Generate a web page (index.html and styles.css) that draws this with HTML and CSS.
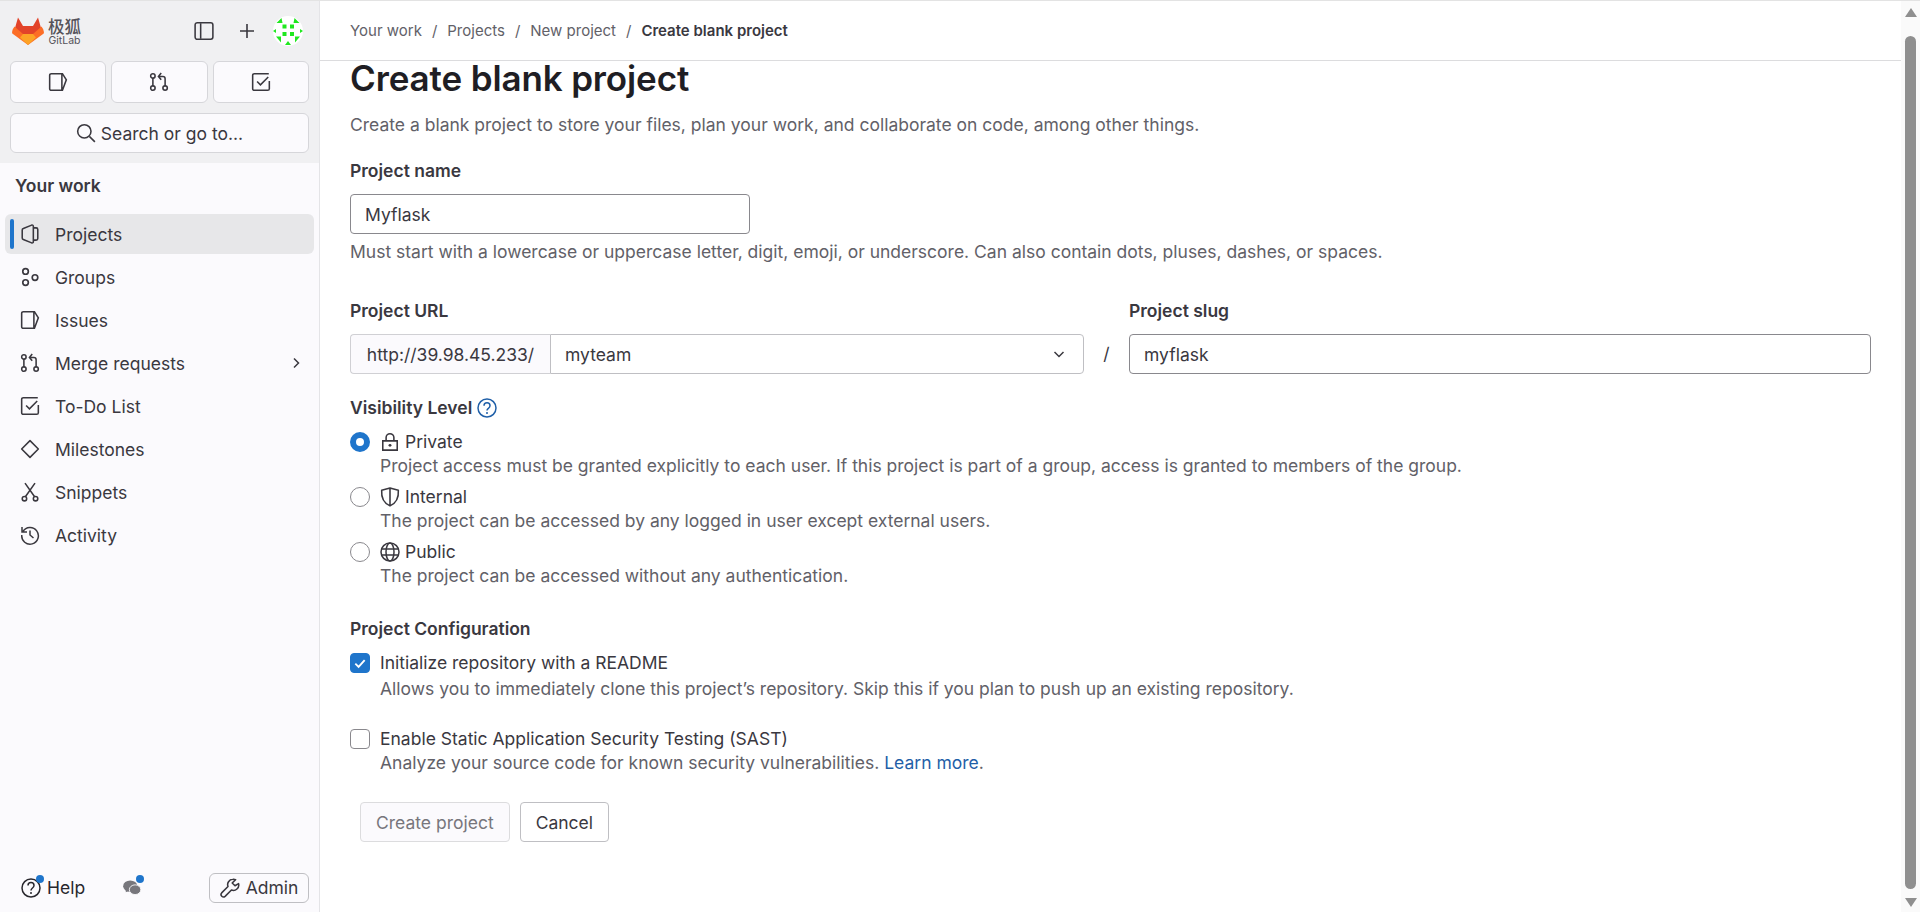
FILE: index.html
```html
<!DOCTYPE html>
<html lang="en">
<head>
<meta charset="UTF-8">
<meta name="viewport" content="width=device-width, initial-scale=1.0">
<title>Create blank project</title>
<link rel="stylesheet" href="styles.css">
</head>
<body>
    <!-- Left sidebar -->
    <div class="sidebar">
        <div class="panel">
            <div class="brand">
                <svg class="logo" viewBox="0 0 32 30" width="32" height="30">
                    <path fill="#e24329" d="M16 29 3 12 6 1.500 11 10h10l5-8.500L29 12z"/>
                    <path fill="#fc6d26" d="M16 29 .6 17.800C-.3 17 0 15.500 .9 13L2.500 10.500 11 18z"/>
                    <path fill="#fc6d26" d="M16 29 31.400 17.800C32.300 17 32 15.500 31.100 13L29.500 10.500 21 18z"/>
                    <path fill="#fca326" d="M16 29 8 21.500 11 18h10l3 3.500z"/>
                </svg>
                <div class="brand-text">
                    <span class="brand-cn">极狐</span>
                    <span class="brand-en">GitLab</span>
                </div>
                <div class="brand-actions">
                    <svg class="icon" viewBox="0 0 18 18" width="20" height="20"><rect x="1" y="1.500" width="16" height="15" rx="2" fill="none" stroke="currentColor" stroke-width="1.400"/><path d="M6 2v14" stroke="currentColor" stroke-width="1.400"/></svg>
                    <svg class="icon plus" viewBox="0 0 16 16" width="16" height="16"><path d="M8 1v14M1 8h14" stroke="currentColor" stroke-width="1.600"/></svg>
                    <svg class="avatar" viewBox="0 0 30 30" width="30" height="30">
                        <circle cx="15" cy="15" r="15" fill="#fff"/>
                        <g fill="#1fe81f">
                            <rect x="9.500" y="8.500" width="4" height="4"/><rect x="17" y="8.500" width="4" height="4"/>
                            <rect x="9.500" y="16" width="4" height="4"/><rect x="17" y="16" width="4" height="4"/>
                            <path d="M3.500 7 8.500 2 9.500 7zM20.500 7l1-5 5 5zM0 15l3-2v4zM30 15l-3-2v4zM3 20.500h5v6zM27 20.500h-5v6zM12 29l3-4 3 4z"/>
                        </g>
                    </svg>
                </div>
            </div>
            <div class="counters">
                <div class="counter">
                    <svg viewBox="0 0 18 18" width="20" height="20"><path d="M3 1.500h10l3.500 5.500-3.500 9.500H3A1.500 1.500 0 0 1 1.500 15V3A1.500 1.500 0 0 1 3 1.500zM12.500 2v14.500" fill="none" stroke="currentColor" stroke-width="1.400"/></svg>
                </div>
                <div class="counter">
                    <svg viewBox="0 0 18 18" width="20" height="20"><g fill="none" stroke="currentColor" stroke-width="1.400"><circle cx="3.500" cy="3.500" r="2"/><circle cx="3.500" cy="14.500" r="2"/><circle cx="14.500" cy="14.500" r="2"/><path d="M3.500 5.500v7M14.500 12.500V6a2 2 0 0 0-2-2H9M11 1 8.500 4 11 7"/></g></svg>
                </div>
                <div class="counter">
                    <svg viewBox="0 0 18 18" width="20" height="20"><path d="M16.500 8v7a1.500 1.500 0 0 1-1.500 1.500H3A1.500 1.500 0 0 1 1.500 15V3A1.500 1.500 0 0 1 3 1.500h13M5.500 8.500 8.500 11.500 15.500 4.500" fill="none" stroke="currentColor" stroke-width="1.400"/></svg>
                </div>
            </div>
            <div class="search">
                <svg viewBox="0 0 18 18" width="20" height="20"><circle cx="7.500" cy="7.500" r="6" fill="none" stroke="currentColor" stroke-width="1.400"/><path d="m12 12 5 5" stroke="currentColor" stroke-width="1.400"/></svg>
                Search or go to...
            </div>
        </div>

        <div class="nav-title">Your work</div>
        <div class="nav">
            <a class="nav-item active" href="#">
                <svg viewBox="0 0 18 18" width="20" height="20"><path d="M3 4 10.500 1c.9-.3 1.500.3 1.500 1.100v13.800c0 .8-.6 1.400-1.500 1.100L3 14a1.500 1.500 0 0 1-1-1.400V5.400C2 4.800 2.400 4.200 3 4zM12 3.500h2.500A1.500 1.500 0 0 1 16 5v8a1.500 1.500 0 0 1-1.500 1.500H12" fill="none" stroke="currentColor" stroke-width="1.400"/></svg>
                Projects
            </a>
            <a class="nav-item" href="#">
                <svg viewBox="0 0 18 18" width="20" height="20"><g fill="none" stroke="currentColor" stroke-width="1.500"><circle cx="5" cy="4" r="2.500"/><circle cx="5" cy="14" r="2.500"/><circle cx="13.500" cy="9.500" r="2.500"/></g></svg>
                Groups
            </a>
            <a class="nav-item" href="#">
                <svg viewBox="0 0 18 18" width="20" height="20"><path d="M3 1.500h10l3.500 5.500-3.500 9.500H3A1.500 1.500 0 0 1 1.500 15V3A1.500 1.500 0 0 1 3 1.500zM12.500 2v14.500" fill="none" stroke="currentColor" stroke-width="1.400"/></svg>
                Issues
            </a>
            <a class="nav-item" href="#">
                <svg viewBox="0 0 18 18" width="20" height="20"><g fill="none" stroke="currentColor" stroke-width="1.400"><circle cx="3.500" cy="3.500" r="2"/><circle cx="3.500" cy="14.500" r="2"/><circle cx="14.500" cy="14.500" r="2"/><path d="M3.500 5.500v7M14.500 12.500V6a2 2 0 0 0-2-2H9M11 1 8.500 4 11 7"/></g></svg>
                Merge requests
                <svg class="chevron" viewBox="0 0 12 12" width="12" height="12"><path d="m4 1.500 4.500 4.500L4 10.500" fill="none" stroke="currentColor" stroke-width="1.500"/></svg>
            </a>
            <a class="nav-item" href="#">
                <svg viewBox="0 0 18 18" width="20" height="20"><path d="M16.500 8v7a1.500 1.500 0 0 1-1.500 1.500H3A1.500 1.500 0 0 1 1.500 15V3A1.500 1.500 0 0 1 3 1.500h13M5.500 8.500 8.500 11.500 15.500 4.500" fill="none" stroke="currentColor" stroke-width="1.400"/></svg>
                To-Do List
            </a>
            <a class="nav-item" href="#">
                <svg viewBox="0 0 18 18" width="20" height="20"><path d="M9 1.500 16.500 9 9 16.500 1.500 9z" fill="none" stroke="currentColor" stroke-width="1.400" stroke-linejoin="round"/></svg>
                Milestones
            </a>
            <a class="nav-item" href="#">
                <svg viewBox="0 0 18 18" width="20" height="20"><g fill="none" stroke="currentColor" stroke-width="1.400"><circle cx="4" cy="15" r="2"/><circle cx="14" cy="15" r="2"/><path d="M5 13 13.500 1M13 13 4.500 1"/></g></svg>
                Snippets
            </a>
            <a class="nav-item" href="#">
                <svg viewBox="0 0 20 20" width="20" height="20"><g fill="none" stroke="currentColor" stroke-width="1.500"><path d="M3 6.500A8.300 8.300 0 1 1 1.800 10M2 2v5h5M10 5.500V10l3.500 3"/></g></svg>
                Activity
            </a>
        </div>

        <div class="sidebar-foot">
            <div class="help">
                <span class="help-icon">
                    <svg viewBox="0 0 20 20" width="20" height="20"><circle cx="10" cy="10" r="9" fill="none" stroke="currentColor" stroke-width="1.500"/><path d="M7 7.500c0-4 6-4 6 0 0 2.500-3 2.500-3 5" fill="none" stroke="currentColor" stroke-width="1.500"/><circle cx="10" cy="15" r="1" fill="currentColor"/></svg>
                    <span class="dot"></span>
                </span>
                Help
            </div>
            <span class="wechat">
                <svg viewBox="0 0 20 17" width="18" height="15"><ellipse cx="8" cy="7" rx="8" ry="6.500" fill="#77767c"/><path d="M3 10v4l4-2z" fill="#77767c"/><ellipse cx="13.500" cy="11" rx="6.500" ry="5.500" fill="#77767c" stroke="#fbfafd"/></svg>
                <span class="dot"></span>
            </span>
            <div class="admin">
                <svg viewBox="0 0 18 18" width="20" height="20"><path d="M11.500 1.200a4.800 4.800 0 0 0-4.300 6.500L1.500 13.400a2.200 2.200 0 0 0 3.100 3.100l5.700-5.700a4.800 4.800 0 0 0 6.400-5.700L13.500 7 11 4.500l3-3a4.800 4.800 0 0 0-2.500-.3z" fill="none" stroke="currentColor" stroke-width="1.400" stroke-linejoin="round"/></svg>
                Admin
            </div>
        </div>
    </div>

    <div class="main">
        <div class="breadcrumbs">
            <a href="#">Your work</a><span class="sep">/</span>
            <a href="#">Projects</a><span class="sep">/</span>
            <a href="#">New project</a><span class="sep">/</span>
            <b>Create blank project</b>
        </div>

        <div class="content">
            <h1>Create blank project</h1>
            <p class="lead">Create a blank project to store your files, plan your work, and collaborate on code, among other things.</p>

            <label class="label name-label">Project name</label>
            <div class="input name-input">Myflask</div>
            <p class="hint">Must start with a lowercase or uppercase letter, digit, emoji, or underscore. Can also contain dots, pluses, dashes, or spaces.</p>

            <div class="url-row">
                <div class="url-col">
                    <label class="label">Project URL</label>
                    <div class="url-group">
                        <div class="url-prefix">http://39.98.45.233/</div>
                        <div class="url-select">
                            myteam
                            <svg viewBox="0 0 12 12" width="12" height="12"><path d="m1.500 4 4.500 4.500L10.500 4" fill="none" stroke="currentColor" stroke-width="1.500"/></svg>
                        </div>
                    </div>
                </div>
                <div class="url-slash">/</div>
                <div class="slug-col">
                    <label class="label">Project slug</label>
                    <div class="input">myflask</div>
                </div>
            </div>

            <div class="label visibility-label">
                Visibility Level
                <svg viewBox="0 0 20 20" width="20" height="20"><circle cx="10" cy="10" r="9" fill="none" stroke="#1f5fa8" stroke-width="1.500"/><path d="M7 7.800c0-4 6-4 6 0 0 2.500-3 2.500-3 4.700" fill="none" stroke="#1f5fa8" stroke-width="1.500"/><circle cx="10" cy="15" r="1" fill="#1f5fa8"/></svg>
            </div>

            <div class="option">
                <span class="radio checked"></span>
                <div class="option-title">
                    <svg viewBox="0 0 18 18"><path d="M2.500 8h13v8.300h-13zM5.500 8V5a3.500 3.500 0 0 1 7 0v3" fill="none" stroke="currentColor" stroke-width="1.400"/><circle cx="9" cy="12" r="1.300" fill="currentColor"/></svg>
                    Private
                </div>
                <div class="option-help">Project access must be granted explicitly to each user. If this project is part of a group, access is granted to members of the group.</div>
            </div>
            <div class="option">
                <span class="radio"></span>
                <div class="option-title">
                    <svg viewBox="0 0 18 18"><path d="M9 1 16.500 3c.5 7-2 11.500-7.500 14C3.500 14.500 1 10 1.500 3zM9 1v16" fill="none" stroke="currentColor" stroke-width="1.400" stroke-linejoin="round"/></svg>
                    Internal
                </div>
                <div class="option-help">The project can be accessed by any logged in user except external users.</div>
            </div>
            <div class="option">
                <span class="radio"></span>
                <div class="option-title">
                    <svg viewBox="0 0 20 20"><g fill="none" stroke="currentColor" stroke-width="1.500"><circle cx="10" cy="10" r="9"/><ellipse cx="10" cy="10" rx="4" ry="9"/><path d="M1.500 7h17M1.500 13h17"/></g></svg>
                    Public
                </div>
                <div class="option-help">The project can be accessed without any authentication.</div>
            </div>

            <div class="label config-label">Project Configuration</div>

            <div class="option readme">
                <span class="checkbox checked">
                    <svg viewBox="0 0 12 12" width="14" height="14"><path d="m2 6.500 2.800 2.800L10 3.500" fill="none" stroke="#fff" stroke-width="1.600"/></svg>
                </span>
                <div class="option-title">Initialize repository with a README</div>
                <div class="option-help">Allows you to immediately clone this project’s repository. Skip this if you plan to push up an existing repository.</div>
            </div>
            <div class="option sast">
                <span class="checkbox"></span>
                <div class="option-title">Enable Static Application Security Testing (SAST)</div>
                <div class="option-help">Analyze your source code for known security vulnerabilities. <a href="#">Learn more</a>.</div>
            </div>

            <div class="actions">
                <div class="btn disabled">Create project</div>
                <div class="btn">Cancel</div>
            </div>
        </div>
    </div>

    <!-- Page scrollbar -->
    <div class="scrollbar">
        <span class="arrow-up"></span>
        <span class="thumb"></span>
        <span class="arrow-down"></span>
    </div>
</body>
</html>
```

FILE: styles.css
```css
/*General formatting*/
html, body {
    height: 100%;
}

body {
    font-family: Inter, "Noto Sans", sans-serif;
    font-size: 17.5px;
    color: #3a383f;
    background-color: #fff;
    margin: 0;
    padding: 0;
    display: flex;
    height: 912px;
    overflow: hidden;
    box-sizing: border-box;
    border-top: 1px solid #e3e3e3;
}

a {
    color: inherit;
    text-decoration: none;
}

p {
    margin: 0;
}

/* Sidebar */
.sidebar {
    width: 320px;
    flex-shrink: 0;
    background-color: #fbfafd;
    border-right: 1px solid #e4e4e7;
    box-sizing: border-box;
    display: flex;
    flex-direction: column;
}

.panel {
    background-color: #f0f0f2;
    padding: 0 10px 10px;
}

.brand {
    height: 60px;
    display: flex;
    align-items: center;
    padding-left: 2px;
}

.brand-text {
    display: flex;
    flex-direction: column;
    align-items: center;
    margin-left: 4px;
    line-height: 1;
    color: #55535a;
}

.brand-cn {
    font-family: "Noto Sans CJK SC", sans-serif;
    font-size: 16.5px;
    font-weight: 500;
    line-height: 18px;
}

.brand-en {
    font-size: 10.500px;
    line-height: 11px;
}

.brand-actions {
    margin-left: auto;
    display: flex;
    align-items: center;
    gap: 25px;
}

.avatar {
    margin-left: -7px;
    margin-right: 6px;
}

.counters {
    display: flex;
    gap: 5px;
}

.counter {
    flex: 1;
    height: 42px;
    background-color: #fbfafd;
    border: 1px solid #d6d6da;
    border-radius: 6px;
    box-sizing: border-box;
    display: flex;
    align-items: center;
    justify-content: center;
}

.search {
    margin-top: 10px;
    height: 40px;
    background-color: #fbfafd;
    border: 1px solid #d6d6da;
    border-radius: 6px;
    box-sizing: border-box;
    display: flex;
    align-items: center;
    justify-content: center;
    gap: 5px;
}

.nav-title {
    font-weight: 600;
    padding: 13px 15px 0;
    height: 51px;
    line-height: 20px;
    box-sizing: border-box;
}

.nav {
    display: flex;
    flex-direction: column;
    gap: 3px;
}

.nav-item {
    position: relative;
    margin: 0 5px;
    height: 40px;
    padding-left: 15px;
    border-radius: 6px;
    display: flex;
    align-items: center;
}

.nav-item svg:first-child {
    margin-right: 15px;
    flex-shrink: 0;
}

.nav-item.active {
    background-color: #e7e7e9;
}

/* Blue marker on the current page */
.nav-item.active::before {
    content: "";
    position: absolute;
    left: 5px;
    top: 5px;
    bottom: 5px;
    width: 4px;
    border-radius: 2px;
    background-color: #1f75cb;
}

.chevron {
    margin-left: auto;
    margin-right: 12px;
}

.sidebar-foot {
    margin-top: auto;
    height: 39px;
    padding: 0 10px 5px 21px;
    display: flex;
    align-items: center;
}

.help {
    display: flex;
    align-items: center;
    gap: 6px;
    color: #28272d;
}

.help-icon, .wechat {
    position: relative;
    display: inline-flex;
}

.dot {
    position: absolute;
    top: -3px;
    right: -3px;
    width: 8px;
    height: 8px;
    border-radius: 50%;
    background-color: #1f75cb;
}

.wechat .dot {
    top: -5px;
}

.wechat {
    margin-left: 38px;
}

.admin {
    margin-left: auto;
    width: 100px;
    height: 30px;
    border: 1px solid #bfbfc3;
    border-radius: 6px;
    box-sizing: border-box;
    display: flex;
    align-items: center;
    justify-content: center;
    gap: 6px;
}

/* Main column */
.main {
    flex: 1;
    min-width: 0;
    display: flex;
    flex-direction: column;
}

.breadcrumbs {
    height: 59px;
    flex-shrink: 0;
    border-bottom: 1px solid #dcdcde;
    padding-left: 30px;
    display: flex;
    align-items: center;
    font-size: 15px;
    color: #626168;
}

.breadcrumbs .sep {
    margin: 0 10px;
}

.breadcrumbs b {
    font-weight: 600;
    color: #3a383f;
}

.content {
    padding: 0 30px;
}

h1 {
    margin: 0;
    font-size: 35px;
    font-weight: 600;
    line-height: 35px;
    letter-spacing: -0.13px;
    color: #1f1e24;
}

.lead {
    margin-top: 17px;
    line-height: 24px;
    color: #626168;
}

.label {
    display: block;
    font-weight: 600;
    line-height: 22px;
}

.name-label {
    margin-top: 23px;
    margin-bottom: 12px;
}

.input {
    height: 40px;
    border: 1px solid #89888d;
    border-radius: 4px;
    box-sizing: border-box;
    padding: 0 14px;
    display: flex;
    align-items: center;
}

.name-input {
    width: 400px;
}

.hint {
    margin-top: 6px;
    line-height: 24px;
    color: #626168;
}

.url-row {
    display: flex;
    margin-top: 36px;
}

.url-row .label {
    margin-bottom: 12px;
}

.url-col {
    width: 734px;
    flex-shrink: 0;
}

.url-group {
    display: flex;
    height: 40px;
}

.url-prefix {
    width: 200px;
    background-color: #fbfafd;
    border: 1px solid #d0d0d4;
    border-right: 0;
    border-radius: 4px 0 0 4px;
    box-sizing: border-box;
    display: flex;
    align-items: center;
    justify-content: center;
}

.url-select {
    flex: 1;
    border: 1px solid #bfbfc3;
    border-radius: 0 4px 4px 0;
    box-sizing: border-box;
    padding: 0 18px 0 14px;
    display: flex;
    align-items: center;
    justify-content: space-between;
}

.url-slash {
    width: 45px;
    text-align: center;
    align-self: flex-end;
    line-height: 40px;
}

.slug-col {
    flex: 1;
}

.visibility-label {
    margin-top: 23px;
    margin-bottom: 11px;
    display: flex;
    align-items: center;
    gap: 5px;
}

.option {
    position: relative;
    padding-left: 30px;
    margin-top: 7px;
}

.option-title {
    display: flex;
    align-items: center;
    gap: 5px;
    height: 24px;
    line-height: 24px;
}

.option-title svg {
    width: 20px;
    height: 20px;
}

.option-help {
    line-height: 24px;
    color: #626168;
}

.option-help a {
    color: #1f5fa8;
}

.radio, .checkbox {
    position: absolute;
    left: 0;
    top: 2px;
    width: 20px;
    height: 20px;
    border: 1px solid #89888d;
    box-sizing: border-box;
    background-color: #fff;
}

.radio {
    border-radius: 50%;
}

.radio.checked {
    border: 6px solid #1f75cb;
}

.checkbox {
    border-radius: 4px;
    display: flex;
    align-items: center;
    justify-content: center;
}

.checkbox.checked {
    background-color: #1f75cb;
    border-color: #1f75cb;
}

.config-label {
    margin-top: 30px;
    margin-bottom: 11px;
}

.readme .option-help {
    margin-top: 2px;
}

.sast {
    margin-top: 26px;
}

.actions {
    display: flex;
    gap: 10px;
    margin-top: 27px;
    padding-left: 10px;
}

.btn {
    height: 40px;
    padding: 0 15px;
    border: 1px solid #bfbfc3;
    border-radius: 4px;
    box-sizing: border-box;
    display: flex;
    align-items: center;
}

.btn.disabled {
    color: #77767c;
    background-color: #fbfafd;
    border-color: #dcdcde;
}

/* Scrollbar */
.scrollbar {
    width: 19px;
    flex-shrink: 0;
    background-color: #fafafa;
    display: flex;
    flex-direction: column;
    align-items: center;
    padding: 7px 0 5px;
    box-sizing: border-box;
}

.thumb {
    flex: 1;
    width: 11px;
    margin: 19px 0 9px;
    border-radius: 6px;
    background-color: #8f8f8f;
}

.arrow-up, .arrow-down {
    width: 0;
    height: 0;
    border-left: 6px solid transparent;
    border-right: 6px solid transparent;
}

.arrow-up {
    border-bottom: 9px solid #8f8f8f;
}

.arrow-down {
    border-top: 9px solid #8f8f8f;
}
```
